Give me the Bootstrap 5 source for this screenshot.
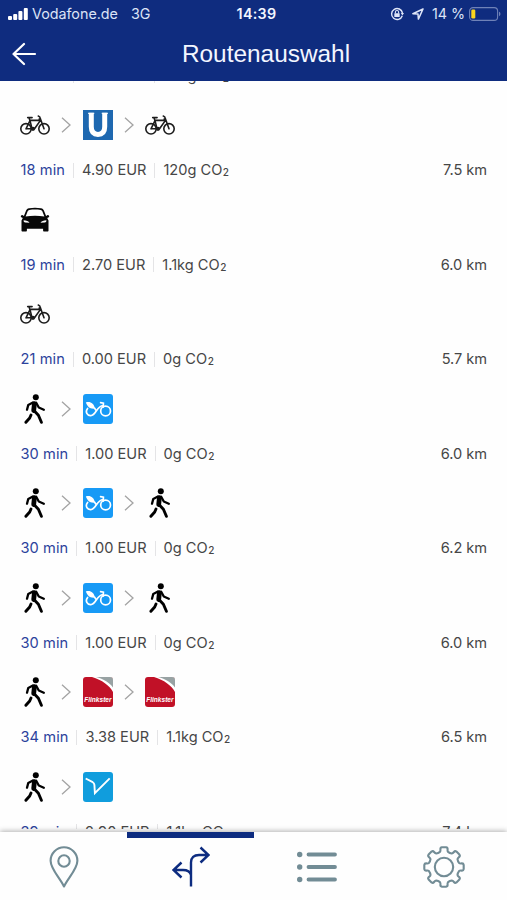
<!DOCTYPE html>
<html lang="de">
<head>
<meta charset="utf-8">
<meta name="viewport" content="width=device-width, initial-scale=1">
<title>Routenauswahl</title>
<link href="https://cdn.jsdelivr.net/npm/bootstrap@5.3.0/dist/css/bootstrap.min.css" rel="stylesheet">
<style>
  body { font-family: Inter, "Liberation Sans", sans-serif; color: #464646; height: 900px; background: #fefefe; }
  svg { display: block; flex: none; }
  .app-header { background: #0f2c7f; height: 81px; color: #f3f6ff; }
  .status-bar { height: 27px; padding: 0 6px 0 8px; font-size: 14.3px; line-height: 27px; }
  .status-side { width: 200px; }
  .carrier { margin-left: 4px; color: #dce3f6; }
  .network { margin-left: 13px; color: #dce3f6; }
  .clock { font-weight: 600; letter-spacing: .3px; margin-left: 4px; }
  .title-bar { height: 54px; }
  .title-bar h1 { font: 24.4px/54px "Liberation Sans", Arial, sans-serif; margin: 0 0 0 25px; }
  .title-side { width: 50px; padding-left: 12px; }
  .route-view { min-height: 0; margin-bottom: 3px; }
  .route-list { margin-top: -65.5px; padding: 0 20px; }
  .route { height: 94.5px; }
  .legs { height: 30px; margin-bottom: 20px; }
  .leg { width: 30px; height: 30px; }
  .chev { margin: 0 11.3px; }
  .facts { font-size: 14.6px; line-height: 20px; white-space: nowrap; }
  .duration { color: #2c429c; letter-spacing: .08px; margin-left: .5px; }
  .distance { letter-spacing: -.05px; }
  .two { font-size: 10px; line-height: 1; position: relative; top: 1px; font-weight: 500; margin-left: .5px; }
  .rule { width: 1px; height: 15px; background: #e4e4e6; margin: 2.5px 8px 0; }
  .tabs { height: 68px; background: #fefefe; z-index: 2; box-shadow: 0 -1px 5px rgba(0,0,0,.3); }
  .tab-link { border-top: 6px solid transparent; padding-bottom: 5px; color: #728c95; }
  .tab-link svg { margin-left: 1px; }
  .tab-link.active { border-color: #0d2c80; color: #0d2c80; }
</style>
</head>
<body class="d-flex flex-column overflow-hidden">

<svg width="0" height="0" class="position-absolute" aria-hidden="true">
  <symbol id="bike" viewBox="0 0 30 30">
    <g fill="none" stroke="#1c1c1c" stroke-width="1.600" stroke-linecap="round" stroke-linejoin="round">
      <circle cx="6" cy="18.800" r="5.200"/><circle cx="24" cy="18.800" r="5.200"/>
      <path d="M6 18.800 10 10.600 12 18.800H6M9.800 10.400H20.500L14.500 18.800H12M9.800 10.400l-.7-2.500M7.700 7.600h4.400M24 18.800 20.500 9c-.2-1.300-.6-2.400-2.200-2.900M20.600 9h-1.400" />
      <circle cx="13" cy="18.800" r="1.300" fill="#1c1c1c"/>
    </g>
  </symbol>
  <symbol id="car" viewBox="0 0 30 30">
    <path fill="#080808" fill-rule="evenodd" d="M9 3.200c4-.7 8-.7 12 0 1.500.3 2.300 1 2.900 2.300l2.200 5.400 1.500-.8 1.400.3.2 1.600-2 .9 1.300 2.500v10.100c0 .7-.4 1.100-1.100 1.100h-3.200c-.7 0-1.100-.4-1.100-1.100v-1.800H6.900v1.800c0 .7-.4 1.100-1.100 1.100H2.600c-.7 0-1.100-.4-1.100-1.100V15.400l1.300-2.500-2-.9.200-1.600 1.400-.3 1.500.8 2.200-5.400C6.700 4.200 7.500 3.500 9 3.200zM9.300 4.900c-.9.200-1.200.5-1.500 1.200l-2.200 5.300c6-1 12.800-1 18.800 0l-2.200-5.300c-.3-.7-.6-1-1.500-1.200-3.700-.6-7.700-.6-11.400 0zM3.600 15.200c0 1.600.5 2.200 1.700 2.300l4.200.3c-.6-1.700-3.300-2.600-5.900-2.600zM26.400 15.200c-2.600 0-5.300.9-5.900 2.600l4.200-.3c1.200-.1 1.700-.7 1.700-2.300z"/>
  </symbol>
  <symbol id="walk" viewBox="0 0 30 30">
    <circle cx="15.800" cy="3.200" r="3" fill="#000"/>
    <g fill="none" stroke="#000" stroke-linecap="round" stroke-linejoin="round">
      <path stroke-width="4.800" d="M14.400 9.700 13.700 16.500"/>
      <path stroke-width="2.300" d="M12.900 8.500 8.300 10.900 7 15.700M16.200 8.800l2.600 4.700 5 2.200"/>
      <path stroke-width="2.900" d="M14.400 17l4 4.300 3 7M11 21l-1.300 3-3.800 4.300"/>
    </g>
  </symbol>
  <symbol id="ubahn" viewBox="0 0 30 30">
    <path fill="#1e68b0" d="M0 0h30v30H0z"/>
    <path fill="none" stroke="#fff" stroke-width="5" d="M8.300 2.800v14c0 5 2.300 7.600 6.700 7.600s6.700-2.600 6.700-7.600v-14"/>
    <path fill="none" stroke="#fff" stroke-width="1" d="M5 3.300h6.300M18.700 3.300H25"/>
  </symbol>
  <symbol id="cab" viewBox="0 0 30 30">
    <rect width="30" height="30" rx="3" fill="#179af6"/>
    <path fill="#fff" d="M2.800 8.500c4-1.500 8.300.5 9.100 6.100-5.300.6-7.300-2-9.100-6.100z"/>
    <g fill="none" stroke="#fff" stroke-width="1.700" stroke-linecap="round">
      <path d="M4.600 14.500c-2.800 3.400-.4 7.300 3.200 7.100 5.400-.2 5.600-9.400 12.300-10.100M17.600 8.700l2.800.5-.2 4M11.600 14.200c.5 1 .9 1.900 1.800 2.600"/>
      <circle cx="22.600" cy="17" r="4.900"/>
    </g>
  </symbol>
  <symbol id="flink" viewBox="0 0 30 30">
    <rect width="30" height="30" rx="3" fill="#c11127"/>
    <path fill="#fff" d="M9 0h18a3 3 0 0 1 3 3v12C26.500 8.500 19 3 9 0z"/>
    <path fill="#98a2a3" d="M13 0h14a3 3 0 0 1 3 3v7.500C27 6 20.500 2 13 0z"/>
    <text x="1.200" y="24.800" textLength="27.400" lengthAdjust="spacingAndGlyphs" font-family="Liberation Sans, sans-serif" font-size="7" font-weight="700" font-style="italic" fill="#fff">Flinkster</text>
  </symbol>
  <symbol id="vbrand" viewBox="0 0 30 30">
    <rect width="30" height="30" rx="3" fill="#109ddd"/>
    <path fill="none" stroke="#fff" stroke-width="1.900" stroke-linejoin="miter" d="M2.700 6.500l7 3.700c1.200.7 1.600 1.400 1.700 2.700l.5 8.300L26.700 6.300"/>
  </symbol>
  <symbol id="chevron" viewBox="0 0 10 16">
    <path fill="none" stroke="#a3a3a3" stroke-width="1.300" d="M1 .8 9 8 1 15.200"/>
  </symbol>
</svg>

<header class="app-header flex-shrink-0">
  <div class="status-bar d-flex justify-content-between">
    <div class="status-side d-flex align-items-center">
      <svg width="20" height="12" fill="#fff"><rect y="8" width="4" height="4" rx="1"/><rect x="5.200" y="6" width="4" height="6" rx="1"/><rect x="10.400" y="3" width="4" height="9" rx="1"/><rect x="15.800" width="4" height="12" rx="1"/></svg>
      <span class="carrier">Vodafone.de</span><span class="network">3G</span>
    </div>
    <span class="clock">14:39</span>
    <div class="status-side d-flex align-items-center justify-content-end">
      <svg width="14" height="14" fill="none" stroke="#dfe6f8" stroke-width="1.400"><path d="M12.300 8.800A5.500 5.500 0 1 1 12.500 6"/><path d="M10.800 6h3.200l-1.600 2.500z" fill="#dfe6f8" stroke="none"/><path d="M5.400 6.500V5c0-2 3.200-2 3.200 0v1.500" stroke-width="1.100"/><rect x="4.300" y="6.200" width="5.400" height="3.800" rx=".6" fill="#dfe6f8" stroke="none"/></svg>
      <svg class="ms-2" width="12" height="12" fill="none" stroke="#dfe6f8" stroke-width="1.500" stroke-linejoin="round"><path d="M11 1 .9 5.700 6 6.100l.4 5z"/></svg>
      <span class="carrier ms-2">14 %</span>
      <svg class="ms-1" width="32" height="14"><rect x=".6" y=".6" width="28" height="12.800" rx="3.500" fill="none" stroke="#6f82b8" stroke-width="1.100"/><rect x="2.300" y="2.400" width="4" height="9.200" rx="1.300" fill="#fbd51d"/><path d="M30 4.800c1.900.5 1.900 3.900 0 4.400z" fill="#6f82b8"/></svg>
    </div>
  </div>
  <div class="title-bar d-flex justify-content-between align-items-center">
    <div class="title-side"><svg width="25" height="24" fill="none" stroke="#fff" stroke-width="2.200" stroke-linecap="round" stroke-linejoin="round"><path d="M12 2 1.500 12 12 22M1.500 12H23"/></svg></div>
    <h1>Routenauswahl</h1>
    <div class="title-side"></div>
  </div>
</header>

<main class="route-view flex-grow-1 overflow-hidden">
  <ul class="route-list list-unstyled mb-0" id="routes"></ul>
</main>

<nav class="tabs nav nav-justified flex-nowrap flex-shrink-0 position-relative">
  <a class="tab-link nav-item d-flex justify-content-center align-items-center" aria-label="Karte">
    <svg width="30" height="42" fill="none" stroke="currentColor" stroke-width="2.100" stroke-linejoin="round"><path d="M15 40.500C11 32 1.600 23 1.600 14.700a13.400 13.400 0 0 1 26.800 0C28.400 23 19 32 15 40.500z"/><circle cx="15" cy="15" r="5.700"/></svg>
  </a>
  <a class="tab-link active nav-item d-flex justify-content-center align-items-center" aria-label="Routen">
    <svg width="40" height="42" fill="none" stroke="currentColor" stroke-width="2.400"><path d="M20 40.500V16.500c0-5 3-7.500 8-7.500h9M29.500 1.500 37.500 9l-8 7.500M20 29c-1-3.500-4-5-8-5H3M10.500 16.500 2.500 24l8 7.500"/></svg>
  </a>
  <a class="tab-link nav-item d-flex justify-content-center align-items-center" aria-label="Liste">
    <svg width="40" height="32" fill="none" stroke="currentColor" stroke-width="3.800" stroke-linecap="round"><path d="M11.500 3.500H38M11.500 16H38M11.500 28.500H38"/><g fill="currentColor" stroke="none"><circle cx="2.700" cy="3.500" r="2.700"/><circle cx="2.700" cy="16" r="2.700"/><circle cx="2.700" cy="28.500" r="2.700"/></g></svg>
  </a>
  <a class="tab-link nav-item d-flex justify-content-center align-items-center" aria-label="Einstellungen">
    <svg width="42" height="42" viewBox="-21 -21 42 42" fill="none" stroke="currentColor" stroke-width="2.100" stroke-linejoin="round"><path id="gear"/><circle r="9.200"/></svg>
  </a>
</nav>

<script src="https://cdn.jsdelivr.net/npm/bootstrap@5.3.0/dist/js/bootstrap.bundle.min.js"></script>
<script>
  const routes = [
    [["walk"], "18 min", "4.90 EUR", "120g", "7.1 km"],
    [["bike", "ubahn", "bike"], "18 min", "4.90 EUR", "120g", "7.5 km"],
    [["car"], "19 min", "2.70 EUR", "1.1kg", "6.0 km"],
    [["bike"], "21 min", "0.00 EUR", "0g", "5.7 km"],
    [["walk", "cab"], "30 min", "1.00 EUR", "0g", "6.0 km"],
    [["walk", "cab", "walk"], "30 min", "1.00 EUR", "0g", "6.2 km"],
    [["walk", "cab", "walk"], "30 min", "1.00 EUR", "0g", "6.0 km"],
    [["walk", "flink", "flink"], "34 min", "3.38 EUR", "1.1kg", "6.5 km"],
    [["walk", "vbrand"], "39 min", "2.90 EUR", "1.1kg", "7.4 km"]
  ];
  const chevron = '<svg class="chev" width="10" height="16"><use href="#chevron"/></svg>';
  document.getElementById("routes").innerHTML = routes.map(([legs, time, price, co2, distance]) => `
    <li class="route">
      <div class="legs d-flex align-items-center">${legs.map(l => `<svg class="leg"><use href="#${l}"/></svg>`).join(chevron)}</div>
      <div class="facts d-flex">
        <span class="duration">${time}</span><i class="rule"></i>
        <span>${price}</span><i class="rule"></i>
        <span>${co2} CO<span class="two">2</span></span>
        <span class="distance ms-auto">${distance}</span>
      </div>
    </li>`).join("");

  // Gear outline: eight rounded teeth around the hub
  const point = (r, deg) => {
    const a = deg * Math.PI / 180;
    return (r * Math.cos(a)).toFixed(2) + " " + (r * Math.sin(a)).toFixed(2);
  };
  let d = "";
  for (let t = 0; t < 360; t += 45) {
    d += (t ? "L" : "M") + point(15.6, t - 15) + "Q" + point(16.2, t - 12) + " " + point(18, t - 11.5)
      + "Q" + point(19.8, t - 11) + " " + point(19.8, t - 6) + "L" + point(19.8, t + 6)
      + "Q" + point(19.8, t + 11) + " " + point(18, t + 11.5) + "Q" + point(16.2, t + 12) + " " + point(15.6, t + 15)
      + "Q" + point(14.9, t + 22.5) + " " + point(15.6, t + 30);
  }
  document.getElementById("gear").setAttribute("d", d + "Z");
</script>
</body>
</html>
